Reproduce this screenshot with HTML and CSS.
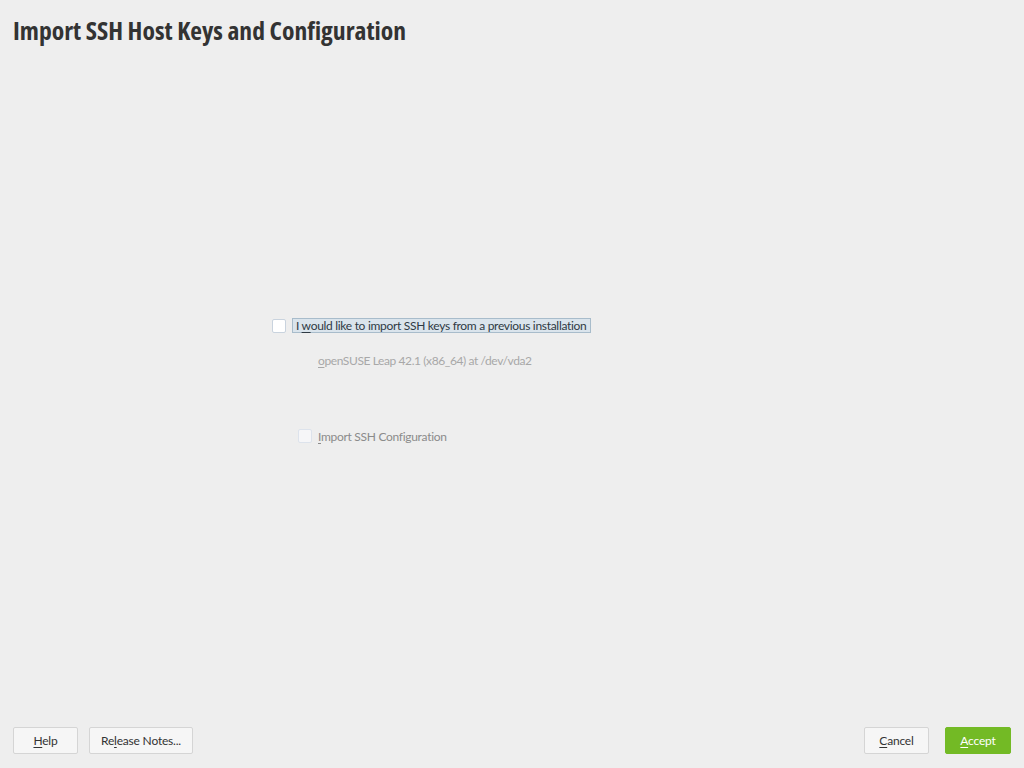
FILE: index.html
```html
<!DOCTYPE html>
<html>
<head>
<meta charset="utf-8">
<link rel="stylesheet" href="styles.css">
</head>
<body>
<div class="page">
  <h1 class="title">Import SSH Host Keys and Configuration</h1>
  <main class="content">
    <div class="row main-row">
      <span class="checkbox"></span>
      <span class="label focused">I <u>w</u>ould like to import SSH keys from a previous installation</span>
    </div>
    <div class="sub"><u>o</u>penSUSE Leap 42.1 (x86_64) at /dev/vda2</div>
    <div class="row cfg-row">
      <span class="checkbox disabled"></span>
      <span class="label dim"><u>I</u>mport SSH Configuration</span>
    </div>
  </main>
  <footer class="footer">
    <div class="group">
      <button class="btn help"><u>H</u>elp</button>
      <button class="btn notes">Re<u>l</u>ease Notes...</button>
    </div>
    <div class="group right">
      <button class="btn cancel"><u>C</u>ancel</button>
      <button class="btn accept"><u>A</u>ccept</button>
    </div>
  </footer>
</div>
</body>
</html>
```

FILE: styles.css
```css
html, body {
  margin: 0;
  padding: 0;
  background: #eeeeee;
}
body {
  font-family: "Lato", "Noto Sans", sans-serif;
  font-size: 12px;
  letter-spacing: -0.3px;
  color: #333;
}
.page {
  width: 1024px;
  height: 768px;
  display: flex;
  flex-direction: column;
}
.title {
  margin: 0;
  padding: 14px 0 0 13px;
  font-family: "Open Sans", sans-serif;
  font-stretch: 75%;
  font-weight: 700;
  font-size: 25.6px;
  line-height: 34px;
  letter-spacing: 0;
  color: #333333;
}
.content {
  flex: 1;
  padding: 270px 0 0 272px;
}
.row {
  display: flex;
  align-items: center;
}
.checkbox {
  width: 12px;
  height: 12px;
  border: 1px solid #c9d3de;
  border-radius: 2px;
  background: #ffffff;
  flex: none;
}
.checkbox.disabled {
  background: #f6f6f8;
  border-color: #dde3ec;
}
.label {
  line-height: 13px;
  white-space: nowrap;
}
.label u, .sub u, .btn u {
  text-decoration-thickness: 1px;
  text-underline-offset: 2px;
}
.focused {
  margin-left: 6px;
  padding: 0 3px 0 3px;
  background: #dae4ec;
  border: 1px solid #a8bccb;
  color: #2f3a44;
}
.sub {
  margin: 20px 0 0 46px;
  color: #a8a8a8;
  line-height: 16px;
  letter-spacing: -0.4px;
}
.cfg-row {
  margin: 60px 0 0 26px;
}
.dim {
  margin-left: 6px;
  color: #8b8b8b;
}
.footer {
  display: flex;
  justify-content: space-between;
  padding: 0 13px 14px 13px;
}
.group {
  display: flex;
  gap: 11px;
}
.group.right {
  gap: 16px;
}
.btn {
  height: 27px;
  padding: 0;
  font-family: "Lato", "Noto Sans", sans-serif;
  font-size: 12px;
  letter-spacing: -0.2px;
  color: #333;
  background: #f6f6f6;
  border: 1px solid #d5d5d5;
  border-radius: 2px;
}
.help { width: 65px; }
.notes { width: 104px; }
.cancel { width: 65px; }
.accept {
  width: 66px;
  background: #73ba25;
  border-color: #73ba25;
  color: #ffffff;
}
```
